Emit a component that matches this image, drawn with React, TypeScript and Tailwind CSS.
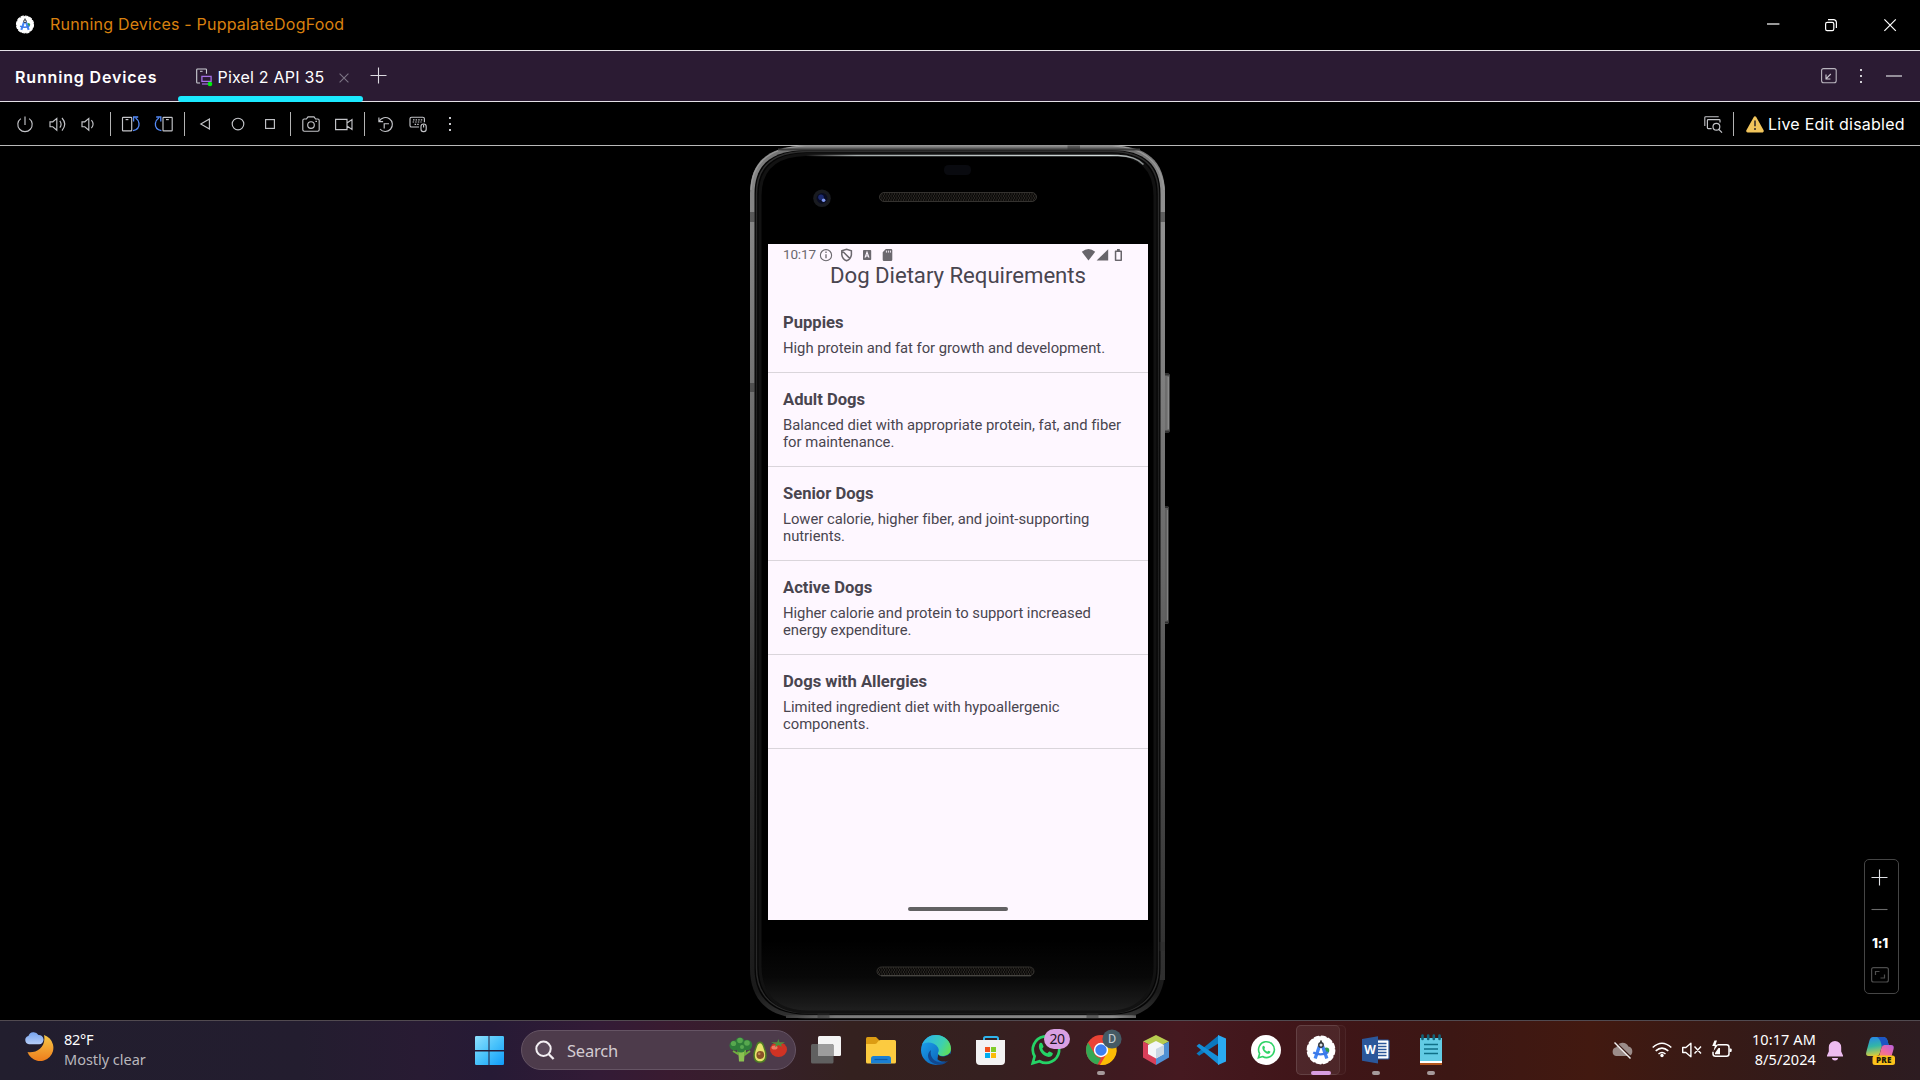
import type { ReactNode } from "react";

type ArtProps = { box: [number, number, number, number]; className?: string; children: ReactNode };

/* A drawing whose coordinates are those of the desktop itself. */
function Art({ box, className = "", children }: ArtProps) {
  return (
    <svg
      width={box[2]}
      height={box[3]}
      viewBox={box.join(" ")}
      fill="none"
      className={`shrink-0 ${className}`}
      aria-hidden="true"
    >
      {children}
    </svg>
  );
}

function StudioLogo({ cx, cy, r }: { cx: number; cy: number; r: number }) {
  const k = r / 15;
  return (
    <g transform={`translate(${cx} ${cy}) scale(${k})`}>
      <circle r="14" fill="#fff" />
      <circle r="13.9" stroke="#fff" strokeWidth="1.8" strokeDasharray="4.5 2.78" strokeLinecap="round" />
      <circle cx="5.6" cy="0.4" r="2.9" fill="#2f9e4f" />
      <path d="M-1.6 -4 L-6 8.8 M1.6 -4 L6 8.8" stroke="#4285f4" strokeWidth="3.4" />
      <path d="M-8 2.6 Q0 6.6 7.2 2.2" stroke="#3b78e7" strokeWidth="2.4" />
      <rect x="-0.9" y="-9.8" width="1.8" height="3" fill="#333" />
      <circle cy="-5.2" r="2.3" fill="#d8dce2" stroke="#30343a" strokeWidth="1.5" />
    </g>
  );
}

function TitleBar() {
  return (
    <header className="flex h-[51px] shrink-0 items-center border-b border-[#e4e0e6] bg-black">
      <Art box={[15, 15, 20, 20]} className="ml-[15px]">
        <StudioLogo cx={25} cy={24.5} r={9.2} />
      </Art>
      <h1 className="mb-0.5 ml-[15px] text-base tracking-[0.2px] text-[#d9810f]">Running Devices - PuppalateDogFood</h1>
      <div className="mr-5 ml-auto flex items-center">
        <Art box={[1763, 15, 20, 20]}>
          <path d="M1767 24h12.5" stroke="#fff" strokeWidth="1.2" />
        </Art>
        <Art box={[1821, 15, 20, 20]} className="ml-[38px]">
          <rect x="1825.6" y="22.4" width="8.2" height="8.2" rx="1.6" stroke="#fff" strokeWidth="1.2" />
          <path d="M1828 19.7h5.6a2.8 2.8 0 0 1 2.8 2.8v5.6" stroke="#fff" strokeWidth="1.2" />
        </Art>
        <Art box={[1880, 15, 20, 20]} className="ml-[39px]">
          <path d="M1884.4 19.4l11.4 11.4M1895.8 19.4l-11.4 11.4" stroke="#fff" strokeWidth="1.2" />
        </Art>
      </div>
    </header>
  );
}

function TabBar() {
  return (
    <nav className="flex h-[51px] shrink-0 border-b border-[#e4e0e6] bg-[#2b1b33] text-white">
      <h2 className="mt-0.5 ml-[15px] w-[163px] self-center text-base font-semibold tracking-[0.84px]">
        Running Devices
      </h2>
      <div className="relative flex w-[185px] items-center">
        <Art box={[194, 66, 20, 21]} className="ml-4">
          <path d="M200 83h-2.5a.8.8 0 0 1-.8-.8V69.8a.8.8 0 0 1 .8-.8h8.2a.8.8 0 0 1 .8.8v4" stroke="#ced0d6" strokeWidth="1.1" />
          <path d="M200 71.3h2.6" stroke="#ced0d6" />
          <rect x="201.9" y="76.4" width="9.2" height="5" stroke="#a571e6" strokeWidth="1.3" />
          <path d="M202 84h6" stroke="#a571e6" strokeWidth="1.2" />
          <circle cx="210" cy="84" r="2.3" fill="#00ee10" />
        </Art>
        <span className="mt-0.5 ml-[3.5px] text-base tracking-[0.2px] whitespace-nowrap">Pixel 2 API 35</span>
        <Art box={[338, 72, 12, 12]} className="mt-1 mr-[13px] ml-auto">
          <path d="M339.6 73.6l8.8 8.8M348.4 73.6l-8.8 8.8" stroke="#7c7484" strokeWidth="1.1" />
        </Art>
        <div className="absolute inset-x-0 -bottom-px h-1.5 rounded-[3px] bg-[#1be9ff]" />
      </div>
      <Art box={[368, 66, 20, 20]} className="mt-[15px] ml-[5px]">
        <path d="M370.5 75.5h16M378.5 67.5v16" stroke="#dcdae0" strokeWidth="1.1" />
      </Art>
      <div className="mr-4 ml-auto flex items-center">
        <Art box={[1820, 66, 18, 20]}>
          <rect x="1821.6" y="68.6" width="14.6" height="14.2" rx="2" stroke="#b9b5be" strokeWidth="1.1" />
          <path d="M1830.8 74l-4.6 4.6M1826 74.6v4.4h4.4" stroke="#cfccd4" strokeWidth="1.1" />
        </Art>
        <Art box={[1856, 66, 10, 20]} className="ml-[18px]">
          <path d="M1860 69h2v2h-2zM1860 75h2v2h-2zM1860 81h2v2h-2z" fill="#d0cdd4" />
        </Art>
        <Art box={[1884, 66, 20, 20]} className="ml-[18px]">
          <path d="M1886 76h16" stroke="#a19ca6" strokeWidth="1.8" />
        </Art>
      </div>
    </nav>
  );
}

function Tool({ x, children }: { x: number; children: ReactNode }) {
  return (
    <button type="button" className="flex h-full w-[33px] items-center justify-center">
      <svg width="23" height="21" viewBox={`${x} 113 23 21`} fill="none" stroke="#c3c4c8" strokeWidth="1.15">
        {children}
      </svg>
    </button>
  );
}

function DeviceToolbar() {
  return (
    <div className="flex h-11 shrink-0 items-center border-b border-[#b9b9b9] bg-black pl-2">
      <Tool x={13}>
        <path d="M20.8 118.6a7.2 7.2 0 1 0 8.4 0M25 116.4v8.6" />
      </Tool>
      <Tool x={46}>
        <path d="M50 121.8h2.8l4-3.4v11.8l-4-3.4H50zM59.8 120.8q2.6 3.4 0 6.8M62 118q5.6 6.2 0 12.6" />
      </Tool>
      <Tool x={79}>
        <path d="M82 121.8h2.8l4-3.4v11.8l-4-3.4H82zM91.4 120.2q3.4 4 0 8" />
      </Tool>
      <div className="mr-[3px] ml-[3px] h-6 w-px bg-[#b4b4b4]" />
      <Tool x={119}>
        <rect x="122.5" y="117.3" width="9.2" height="13.6" rx="0.6" />
        <path d="M125.6 119.6h2.8" />
        <path d="M133 130.6q6.6-1.2 6-7.2q-.4-3.4-3.4-5.4M133.6 121.4v-4.4h4.6" stroke="#548af7" strokeWidth="1.3" />
      </Tool>
      <Tool x={152}>
        <rect x="163" y="117.3" width="9.2" height="13.6" rx="0.6" />
        <path d="M166 119.6h2.8" />
        <path d="M161.4 130.6q-6.600-1.200-6-7.200q.4-3.400 3.400-5.400M160.800 121.400v-4.400h-4.600" stroke="#548af7" strokeWidth="1.3" />
      </Tool>
      <div className="mr-[3px] ml-1 h-6 w-px bg-[#b4b4b4]" />
      <Tool x={193}>
        <path d="M200.8 124l8.6-5v10z" />
      </Tool>
      <Tool x={226}>
        <circle cx="238" cy="124" r="5.8" />
      </Tool>
      <Tool x={259}>
        <rect x="265.6" y="119.6" width="8.8" height="8.8" />
      </Tool>
      <div className="mr-[3px] ml-[3px] h-6 w-px bg-[#b4b4b4]" />
      <Tool x={299}>
        <path d="M302.8 120.4a1.4 1.4 0 0 1 1.4-1.4h2.2l1.6-2.2h6l1.6 2.2h2.2a1.4 1.4 0 0 1 1.4 1.4v9.4a1.4 1.4 0 0 1-1.4 1.4h-13.6a1.4 1.4 0 0 1-1.4-1.4z" />
        <circle cx="311" cy="125" r="3.3" />
        <path d="M315.4 121.4h1.6" />
      </Tool>
      <Tool x={332}>
        <path d="M335.6 119.4h11.4v10.2h-11.4zM347 123l5-3.4v9.8l-5-3.4" />
      </Tool>
      <div className="mr-[3px] ml-1 h-6 w-px bg-[#b4b4b4]" />
      <Tool x={373}>
        <path d="M378.9 117.4v4.2h4.2M379.2 121.2a7 7 0 1 1 .8 7.8M384.2 128.4v-4.6h4.8" />
      </Tool>
      <Tool x={406}>
        <path d="M419 127h-7.4a1.6 1.6 0 0 1-1.6-1.6v-6.6a1.6 1.6 0 0 1 1.6-1.6h11.2a1.6 1.6 0 0 1 1.6 1.6v3.4" />
        <path d="M413 119.8h10M412.6 122h9M414.6 124.4h5" strokeDasharray="1.5 1.1" />
        <rect x="421" y="124" width="5.2" height="7.6" rx="2.4" />
        <path d="M423.6 124.4v3" />
      </Tool>
      <Tool x={439}>
        <path d="M449 116.9h2v2h-2zM449 123h2v2h-2zM449 129.1h2v2h-2z" fill="#c9cace" stroke="none" />
      </Tool>
      <Art box={[1702, 114, 22, 20]} className="ml-auto">
        <path d="M1704.8 126v-8.400a.9.9 0 0 1 .9-.9h13" stroke="#c3c4c8" strokeWidth="1.1" />
        <path d="M1711.600 128.600h-3.400a.8.8 0 0 1-.8-.8v-7.400a.8.8 0 0 1 .8-.8h11a.8.8 0 0 1 .8.8v2" stroke="#c3c4c8" strokeWidth="1.2" />
        <circle cx="1716.4" cy="126.8" r="3.4" stroke="#c3c4c8" strokeWidth="1.2" />
        <path d="M1718.8 129.4l3.2 3.2" stroke="#c3c4c8" strokeWidth="1.3" />
      </Art>
      <div className="ml-[9px] h-6 w-px bg-[#b4b4b4]" />
      <Art box={[1745, 113, 20, 20]} className="ml-[11px]">
        <path d="M1755 116.8l7.400 13.200h-14.800z" fill="#f2c55c" stroke="#f2c55c" strokeWidth="2.8" strokeLinejoin="round" />
        <path d="M1755 119.6v5.600M1755 127v2" stroke="#5e4d33" strokeWidth="2" />
      </Art>
      <span className="mr-[14px] ml-[3px] w-[138px] text-base tracking-[0.25px] whitespace-nowrap text-white">
        Live Edit disabled
      </span>
    </div>
  );
}

function PhoneFrame() {
  return (
    <svg
      width="424"
      height="875"
      viewBox="748 145 424 875"
      fill="none"
      className="absolute -top-px left-0"
      aria-hidden="true"
    >
      <defs>
        <linearGradient id="metal" x1="0" y1="145" x2="0" y2="1018" gradientUnits="userSpaceOnUse">
          <stop offset="0" stopColor="#6e6e6e" />
          <stop offset="0.03" stopColor="#848484" />
          <stop offset="0.1" stopColor="#868686" />
          <stop offset="0.4" stopColor="#646464" />
          <stop offset="0.62" stopColor="#3c3c3c" />
          <stop offset="0.9" stopColor="#202020" />
          <stop offset="0.97" stopColor="#1a1a1a" />
          <stop offset="1" stopColor="#333" />
        </linearGradient>
        <linearGradient id="metalR" x1="0" y1="145" x2="0" y2="1018" gradientUnits="userSpaceOnUse">
          <stop offset="0" stopColor="#8c8c8c" />
          <stop offset="0.1" stopColor="#909090" />
          <stop offset="0.5" stopColor="#666" />
          <stop offset="0.75" stopColor="#444" />
          <stop offset="1" stopColor="#2a2a2a" />
        </linearGradient>
        <linearGradient id="chin" x1="0" y1="940" x2="0" y2="1014" gradientUnits="userSpaceOnUse">
          <stop offset="0" stopColor="#000" />
          <stop offset="0.5" stopColor="#080808" />
          <stop offset="0.85" stopColor="#191919" />
          <stop offset="1" stopColor="#222" />
        </linearGradient>
        <linearGradient id="shine" x1="806" y1="0" x2="1144" y2="0" gradientUnits="userSpaceOnUse">
          <stop offset="0" stopColor="#fff" stopOpacity="0" />
          <stop offset="0.15" stopColor="#c9d2d2" stopOpacity="0.8" />
          <stop offset="0.9" stopColor="#d5dede" />
          <stop offset="1" stopColor="#b5bcbc" stopOpacity="0.7" />
        </linearGradient>
        <linearGradient id="lip" x1="780" y1="0" x2="1150" y2="0" gradientUnits="userSpaceOnUse">
          <stop offset="0" stopColor="#333" />
          <stop offset="0.15" stopColor="#7a7a7a" />
          <stop offset="0.9" stopColor="#8a8a8a" />
          <stop offset="1" stopColor="#444" />
        </linearGradient>
        <linearGradient id="inner" x1="0" y1="145" x2="0" y2="1018" gradientUnits="userSpaceOnUse">
          <stop offset="0" stopColor="#2e2e2e" />
          <stop offset="0.4" stopColor="#1e1e1e" />
          <stop offset="1" stopColor="#2a2a2a" />
        </linearGradient>
        <pattern id="mesh" width="5" height="4" patternUnits="userSpaceOnUse">
          <rect width="5" height="4" fill="#0b0a09" />
          <path d="M0.5 0l2 2-2 2M3 0l2 2-2 2" stroke="#322e2a" strokeWidth="0.8" />
        </pattern>
      </defs>

      {/* side keys */}
      <rect x="1163" y="373.5" width="6.6" height="59" rx="1.5" fill="#6d6d6d" />
      <path d="M1168.2 377v52" stroke="#999" />
      <path d="M1165 374.5h4M1165 431.5h4" stroke="#333" strokeWidth="2" />
      <rect x="1163" y="506" width="5.6" height="118" rx="1.5" fill="#5e5e5e" />
      <path d="M1167.4 510v110" stroke="#858585" />
      <path d="M1165 507h3M1165 622.5h3" stroke="#2e2e2e" strokeWidth="2" />

      {/* body shell */}
      <path
        d="M750 194C750 160 770 146 806 145.5H1112C1146 146 1165 160 1165 194V968C1165 1000 1146 1018.5 1112 1018.5H806C768 1018.5 750 1000 750 968Z"
        fill="url(#metal)"
      />
      <path d="M1159.5 170Q1165 180 1165 194V980H1159.5z" fill="url(#metalR)" />
      <path
        d="M754.5 194C754.5 164 772 150.5 806 150H1112C1144 150.5 1160.5 164 1160.5 194V968C1160.5 998 1142 1014.8 1110 1014.8H808C772 1014.8 754.5 998 754.5 968Z"
        fill="#050505"
      />
      <path
        d="M756.5 194C756.5 166 774 152 806 151.5H1112C1142 152 1158.5 166 1158.5 194V968C1158.5 996 1140 1013 1110 1013H808C774 1013 756.5 996 756.5 968Z"
        stroke="url(#inner)"
        strokeWidth="1.4"
      />
      <path
        d="M760 196C760 168 776 155 806 154.5H1112C1140 155 1155 168 1155 196V966C1155 994 1138 1012 1110 1012H808C776 1012 760 994 760 966Z"
        fill="url(#chin)"
        stroke="#121212"
        strokeWidth="3"
      />

      {/* highlights and antenna bands */}
      <path d="M751 190C752 161 772 147 806 146H1112C1142 147 1161 160 1164 190" stroke="#999" strokeWidth="1.2" />
      <path d="M778 149.500H1140" stroke="#3a3a3a" strokeWidth="2" />
      <path d="M806 155.400H1118Q1136 156 1143.500 164.500" stroke="url(#shine)" strokeWidth="1.5" />
      <path d="M786 1016.600H1136" stroke="url(#lip)" strokeWidth="2.600" />
      <path
        d="M1067.5 145.5h12.5v5h-12.5zM750 212h5v10h-5zM1160 212h5v10h-5zM750 383h5v9h-5zM1159.500 942h5.500v9h-5.500zM817.500 1013.500h12v5h-12zM1086.500 1013.500h12v5h-12z"
        fill="#2c2c2c"
        fillOpacity="0.5"
      />

      {/* sensor, camera, speakers */}
      <rect x="944" y="165" width="27" height="10" rx="4.5" fill="#090a0f" />
      <circle cx="822" cy="198.3" r="8.800" fill="#191b20" />
      <circle cx="822" cy="198.3" r="5.400" fill="#090c22" />
      <circle cx="821" cy="197.200" r="2.800" fill="#1c2a6e" />
      <circle cx="823.600" cy="200.300" r="1.800" fill="#7f98f0" />
      <rect x="879.5" y="192.500" width="157" height="9" rx="4.5" fill="url(#mesh)" stroke="#34322f" />
      <rect x="877" y="967" width="157" height="8.600" rx="4.300" fill="url(#mesh)" stroke="#34322f" />
      <path d="M881 975.800h150" stroke="#55534e" strokeWidth="0.900" />
    </svg>
  );
}

const GROUPS = [
  { name: "Puppies", need: ["High protein and fat for growth and development."] },
  { name: "Adult Dogs", need: ["Balanced diet with appropriate protein, fat, and fiber", "for maintenance."] },
  { name: "Senior Dogs", need: ["Lower calorie, higher fiber, and joint-supporting", "nutrients."] },
  { name: "Active Dogs", need: ["Higher calorie and protein to support increased", "energy expenditure."] },
  { name: "Dogs with Allergies", need: ["Limited ingredient diet with hypoallergenic", "components."] },
];

function PhoneScreen() {
  return (
    <div className="relative mt-[98px] ml-5 flex h-[676px] w-[380px] flex-col bg-[#fef7ff] font-[Roboto,sans-serif] text-[#49454f]">
      <div className="flex h-[22px] shrink-0 items-center pl-[15px] text-[#6b686e]">
        <span className="mb-0.5 w-9 text-[13.5px] leading-5 tracking-[-0.15px]">10:17</span>
        <Art box={[819, 247, 75, 16]}>
          <circle cx="826" cy="255.200" r="5.600" stroke="#6b686e" strokeWidth="1.1" />
          <path d="M826 254.200v4M826 251.600v1.300" stroke="#6b686e" strokeWidth="1.3" />
          <path d="M841.800 250.800l4.800-1.400 4.800 1.400v4q-.6 4.200-4.800 6-4.200-1.800-4.800-6zM842.600 251.200l7.400 7.400" stroke="#6b686e" strokeWidth="1.5" />
          <rect x="863" y="250" width="8.200" height="10" rx="0.8" fill="#6b686e" />
          <path d="M865 257.600l2-5.400 2 5.400M865.800 256h2.600" stroke="#fef7ff" strokeWidth="1.1" />
          <path d="M885.800 249h5.200a1.300 1.300 0 0 1 1.300 1.300v9.400a1.300 1.300 0 0 1-1.300 1.300h-7a1.300 1.300 0 0 1-1.300-1.300v-7.400z" fill="#6b686e" />
          <path d="M886.400 250.600v2M888.400 250.600v2M890.400 250.600v2" stroke="#fef7ff" strokeWidth="0.9" />
        </Art>
        <Art box={[1081, 247, 44, 16]} className="mr-[23px] ml-auto">
          <path d="M1081.800 251.800q6.700-5.400 13.400 0l-6.700 8.700z" fill="#68656b" />
          <path d="M1108.200 249.200v11.400h-11.600z" fill="#68656b" />
          <path d="M1117 249h2.800v1.400h1.400a.8.8 0 0 1 .8.8v9a.8.8 0 0 1-.8.8h-5.600a.8.8 0 0 1-.8-.8v-9a.8.8 0 0 1 .8-.8h1.400z" fill="#68656b" />
          <path d="M1116.300 252h4.200v7.600h-4.200z" fill="#fef7ff" />
        </Art>
      </div>
      <h3 className="-mt-[4px] h-[26px] shrink-0 text-center text-[22.2px] leading-[26px] tracking-[-0.04px]">
        Dog Dietary Requirements
      </h3>
      <ul className="mt-[8px]">
        {GROUPS.map((g) => (
          <li key={g.name} className="border-b border-[#dad5db] px-[15px] pt-[17px] pb-[14px]">
            <h4 className="text-[16.6px] leading-5 font-bold">{g.name}</h4>
            <p className="mt-[7px] text-[14.8px] leading-[17.5px] tracking-[-0.02px] whitespace-nowrap">
              {g.need.map((line) => (
                <span key={line} className="block">
                  {line}
                </span>
              ))}
            </p>
          </li>
        ))}
      </ul>
      <div className="mx-auto mt-auto mb-[9px] h-1 w-[100px] rounded-full bg-[#626163]" />
    </div>
  );
}

function ZoomPanel() {
  return (
    <aside className="absolute right-[21px] bottom-[26px] flex h-[135px] w-[35px] flex-col items-center rounded-[5px] border border-[#454545] pr-[3px] text-white">
      <Art box={[1871, 867, 20, 20]} className="mt-[7px]">
        <path d="M1872.5 877.5h16M1880.500 869.500v16" stroke="#dfe1e5" strokeWidth="1.1" />
      </Art>
      <Art box={[1871, 904, 20, 10]} className="mt-[17px]">
        <path d="M1872.5 909.500h16" stroke="#6a6a6a" strokeWidth="1.1" />
      </Art>
      <span className="mt-[20px] h-[18px] text-[13.5px] leading-[18px] font-extrabold tracking-[-0.3px]">1:1</span>
      <Art box={[1871, 966, 20, 18]} className="mt-[14px]">
        <rect x="1872.6" y="967.600" width="16.800" height="14.400" rx="2" stroke="#4d4d4d" strokeWidth="1.2" />
        <path d="M1876.500 975v-3.500h4M1885.500 974.500v3.500h-4" stroke="#4d4d4d" strokeWidth="1.2" />
      </Art>
    </aside>
  );
}

function Slot({ dot = "", box = false, x, children }: { dot?: string; box?: boolean; x: number; children: ReactNode }) {
  return (
    <div className="relative flex h-full w-[55px] items-start pl-3">
      {box && (
        <>
          <div className="absolute top-1 left-[3px] h-[50px] w-[50px] rounded-[5px] border border-white/5 bg-white/[0.02]" />
          <div className="absolute top-1 left-[3px] h-[50px] w-11 rounded-[5px] border border-white/[0.07] bg-white/[0.06]" />
        </>
      )}
      <svg width="36" height="36" viewBox={`${x} 1029 36 36`} fill="none" className="relative mt-2 overflow-visible">
        {children}
      </svg>
      {dot && <div className={dot} />}
    </div>
  );
}

const DOT = "absolute left-6 bottom-[5px] h-1 w-2 rounded-full bg-[#a69a9b]";
const ACTIVE_DOT = "absolute left-[18px] bottom-[5px] h-1 w-5 rounded-full bg-[#d89de0]";

function Produce() {
  return (
    <Art box={[727, 1035, 62, 30]} className="mr-1.5 ml-auto">
      <path d="M738 1048l7-1-1 14.500h-5z" fill="#8cc152" />
      <path d="M733 1051l5 3 1-5M750 1051l-5 3.500v-6" stroke="#6fae3f" strokeWidth="2" />
      <g fill="#2f7d3a">
        <circle cx="734.5" cy="1045.500" r="5" />
        <circle cx="740" cy="1042.500" r="5" />
        <circle cx="747" cy="1045" r="5.200" />
        <circle cx="741" cy="1048" r="4.500" />
      </g>
      <g fill="#57a84e">
        <circle cx="733.500" cy="1043.500" r="2.600" />
        <circle cx="740" cy="1040.500" r="2.800" />
        <circle cx="747" cy="1043" r="2.800" />
        <circle cx="742" cy="1047" r="2" />
      </g>
      <path d="M760 1041.500c3.600 0 4 4.400 5.600 8.400 1.800 4.600 2 13-5.600 13s-7.400-8.400-5.600-13c1.600-4 2-8.400 5.600-8.400z" fill="#4e7d24" />
      <path d="M760 1043.200c2.400 0 3.200 4.200 4.300 7.400 1.500 4 1.500 10.600-4.300 10.600s-5.800-6.600-4.300-10.600c1.100-3.200 1.900-7.400 4.300-7.400z" fill="#e6e36a" />
      <circle cx="760.3" cy="1055" r="3.900" fill="#8a5128" />
      <circle cx="759.200" cy="1053.800" r="1.300" fill="#c38b58" />
      <ellipse cx="778.500" cy="1049.500" rx="8.500" ry="7.500" fill="#cf3324" />
      <ellipse cx="774.500" cy="1047.500" rx="3" ry="2" fill="#ee7a62" />
      <path d="M771 1042l6 .4 1.500-3.400 1 3.400 5.500-.4-4 2.400 1 2.600-3.500-2-3.500 2.200 1-2.800z" fill="#4c9140" />
    </Art>
  );
}

function Taskbar() {
  return (
    <footer className="relative flex h-[60px] shrink-0 border-t border-[#514a50] bg-[linear-gradient(90deg,#221e2e_0px,#231d2f_300px,#281b33_420px,#261a35_490px,#331b36_600px,#391b30_670px,#36202a_760px,#34211f_850px,#352020_990px,#3f1a20_1120px,#451920_1180px,#3f1518_1320px,#3c1714_1450px,#421910_1590px,#371a16_1720px,#2f1b1d_1850px,#2d1c21_1920px)] font-['Noto_Sans','Open_Sans',sans-serif] text-white">
      <div className="flex w-[473px] pl-[23px]">
        <Art box={[24, 1033, 32, 32]} className="mt-[11px]">
          <defs>
            <linearGradient id="moon" x1="0" y1="1036" x2="0" y2="1062" gradientUnits="userSpaceOnUse">
              <stop stopColor="#f7c948" />
              <stop offset="1" stopColor="#ee7d1c" />
            </linearGradient>
            <linearGradient id="cloud" x1="0" y1="1034" x2="0" y2="1045" gradientUnits="userSpaceOnUse">
              <stop stopColor="#7ba6ee" />
              <stop offset="1" stopColor="#b4cdf8" />
            </linearGradient>
          </defs>
          <path d="M45 1036a13.300 13.300 0 1 1-16.500 17c9 1.500 19-5 16.500-17z" fill="url(#moon)" />
          <path d="M30 1045.300a4.300 4.300 0 0 1-.6-8.400 5.600 5.600 0 0 1 10-1 4.400 4.400 0 0 1 .8 9.400z" fill="url(#cloud)" />
        </Art>
        <div className="mt-2 ml-[9px] text-[14.5px] leading-5">
          <p className="tracking-[-0.25px]">82°F</p>
          <p className="tracking-[-0.02px] text-[#b9b7bc]">Mostly clear</p>
        </div>
      </div>

      <Art box={[473, 1034, 34, 34]} className="mt-[13px]">
        <defs>
          <linearGradient id="win" x1="475" y1="1036" x2="504" y2="1065" gradientUnits="userSpaceOnUse">
            <stop stopColor="#8fe0fd" />
            <stop offset="0.5" stopColor="#48c2fb" />
            <stop offset="1" stopColor="#109bf8" />
          </linearGradient>
        </defs>
        <path d="M475 1037.200q0-1.200 1.200-1.200H488.500v14H475zM489.500 1036h13.300q1.200 0 1.200 1.200V1050h-14.500zM475 1051.500h13.500v13.500h-12.300q-1.200 0-1.200-1.200zM489.500 1051.500H504v12.300q0 1.200-1.200 1.200h-13.300z" fill="url(#win)" />
      </Art>

      <div className="mt-[9px] ml-[14px] flex h-10 w-[275px] items-center rounded-full border border-[#655464] bg-[#4d3b4b]">
        <Art box={[535, 1039, 22, 22]} className="ml-[13px]">
          <circle cx="543.500" cy="1048.800" r="7.200" fill="#5b4a5b" stroke="#f3eff3" strokeWidth="2" />
          <path d="M548.800 1054.200l4.800 4.800" stroke="#f3eff3" strokeWidth="2.300" />
        </Art>
        <span className="mt-0.5 pl-[10px] text-[16.5px] tracking-[-0.2px] text-[#d3ccd2]">Search</span>
        <Produce />
      </div>

      <div className="ml-[2px] flex">
        <Slot x={810}>
          <rect x="818" y="1036" width="23" height="20" rx="1.5" fill="#f4f4f4" />
          <rect x="811" y="1044" width="22.500" height="19.500" rx="1.500" fill="#606060" />
          <path d="M818 1044h14q1.500 0 1.500 1.500V1056H818z" fill="#9d9d9d" />
        </Slot>
        <Slot x={865}>
          <path d="M866 1038.500q0-1.500 1.500-1.500h8.500l3.500 3.500V1046H866z" fill="#dc9c13" />
          <path d="M866 1044h9q1.500 0 3-2.500 1-1.500 2.500-1.500h14q1.500 0 1.500 1.500V1062q0 1.500-1.500 1.500h-27q-1.500 0-1.500-1.500z" fill="#fccb40" />
          <path d="M871 1063.500v-5q0-2.500 2.500-2.500h15q2.500 0 2.500 2.500v5z" fill="#1a80d4" />
          <path d="M874.500 1059.500h13" stroke="#0c5ba8" strokeWidth="1.2" />
        </Slot>
        <Slot x={920}>
          <defs>
            <linearGradient id="edgeTop" x1="925" y1="1038" x2="951" y2="1052" gradientUnits="userSpaceOnUse">
              <stop stopColor="#2cb5e8" />
              <stop offset="0.6" stopColor="#3dd0b0" />
              <stop offset="1" stopColor="#66e04a" />
            </linearGradient>
            <linearGradient id="edgeLow" x1="921" y1="1045" x2="940" y2="1064" gradientUnits="userSpaceOnUse">
              <stop stopColor="#1a9be8" />
              <stop offset="1" stopColor="#0c63b8" />
            </linearGradient>
          </defs>
          <circle cx="936" cy="1050" r="15" fill="url(#edgeLow)" />
          <path d="M922 1044.500C925 1038 930 1035 936 1035c9 0 15 6.500 15 13.500 0 5.500-4.500 7.500-8.500 7.500-3.500 0-5-1.500-4.500-3 1-2 1-3.500 0-5.500-3-5.500-12-6.500-16-3z" fill="url(#edgeTop)" />
          <path d="M931 1050c-2 7 4 12.500 10.500 12.500 3 0 5.500-1.200 7.500-3-3 5-9 6.200-14 4.500-7-2.500-9.500-9.500-4-14z" fill="#12488f" />
          <path d="M938.300 1054c.2 2 3 3 6.500 2.200 2-.4 4-1.500 5.200-3l1.500 2-3 5c-3.500 2.300-8.500 1.500-11-1z" fill="#34201f" />
        </Slot>
        <Slot x={975}>
          <path d="M984 1041v-2.500q0-1.500 1.500-1.500h11q1.500 0 1.500 1.500v2.500" stroke="#2fb4ec" strokeWidth="2" />
          <path d="M976 1040h29v21q0 4-4 4h-21q-4 0-4-4z" fill="#f3f3f3" />
          <path d="M985 1047h5v5h-5z" fill="#f1511b" />
          <path d="M991 1047h5v5h-5z" fill="#80cc28" />
          <path d="M985 1053h5v5h-5z" fill="#00adef" />
          <path d="M991 1053h5v5h-5z" fill="#fbbc09" />
        </Slot>
        <Slot x={1030}>
          <path d="M1032.700 1063.300l1.900-7a13.200 13.200 0 1 1 5 4.900z" stroke="#25d366" strokeWidth="2.700" />
          <path d="M1039.200 1044.200c1-1.800 2.700-1.600 3.200-.4l1.100 2.600c.3.700-1.200 1.900-1.200 2.300 1 2 2.600 3.600 5 4.500.5 0 1.600-2 2.300-1.700l3 1.500c.6.400-.2 2.800-1.800 3.500-5.300 2.300-13.600-6-11.600-12.300z" fill="#25d366" />
          <rect x="1044" y="1029" width="26" height="20" rx="10" fill="#d9a0e3" />
          <text x="1057" y="1044.300" textAnchor="middle" fontSize="14" letterSpacing="-0.5" fill="#1c121d" fontFamily="Noto Sans, sans-serif">
            20
          </text>
        </Slot>
        <Slot x={1085} dot={DOT}>
          <circle cx="1101" cy="1050" r="15" fill="#ea4335" />
          <path d="M1088 1042.500l7.100 12.300q2.200 3.200 5.900 3.200l-3.500 6.600A15 15 0 0 1 1088 1042.500z" fill="#34a853" />
          <path d="M1101 1043h13.800A15 15 0 0 1 1100 1065l7.200-12.300z" fill="#fbbc05" />
          <circle cx="1101" cy="1050" r="7.200" fill="#fff" />
          <circle cx="1101" cy="1050" r="5.700" fill="#3d7ff0" />
          <circle cx="1112" cy="1039" r="9.600" fill="#455a64" />
          <text x="1112" y="1043.400" textAnchor="middle" fontSize="12.5" fill="#c3ced4" fontFamily="Roboto, sans-serif">
            D
          </text>
        </Slot>
        <Slot x={1140}>
          <path d="M1156 1035l13 6.500-13 6.500-13-6.500z" fill="#b8cc50" />
          <path d="M1143 1041.500l13 6.500v17l-13-7.500z" fill="#d8405a" />
          <path d="M1169 1041.500l-13 6.500v17l13-7.500z" fill="#4f90d4" />
          <path d="M1156 1041l8 4v9l-8 4.500-8-4.500v-9z" fill="#f3f6f8" />
          <path d="M1156 1049l8-4v9l-8 4.500z" fill="#c9d7e4" />
        </Slot>
        <Slot x={1195}>
          <path d="M1196.500 1053.500l2.600 2.200L1219 1043v-8z" fill="#0b78be" />
          <path d="M1196.500 1046l2.600-2.200L1219 1057v8z" fill="#158fd8" />
          <path d="M1218 1035l8 3.500v23l-8 3.500z" fill="#2aaaf2" />
        </Slot>
        <Slot x={1250}>
          <circle cx="1266" cy="1050" r="15" fill="#fff" />
          <path d="M1258.400 1057.800l1.200-4.300a7.900 7.900 0 1 1 3 3z" stroke="#2fd366" strokeWidth="1.6" />
          <path d="M1262.500 1046.500c.6-1 1.600-.9 1.900-.2l.6 1.500c.2.400-.7 1-.7 1.300.6 1.200 1.500 2 2.900 2.600.3 0 .9-1.100 1.300-1l1.800.9c.3.200-.1 1.600-1 2-3.100 1.300-8-3.500-6.800-7.100z" fill="#2fd366" />
        </Slot>
        <Slot x={1305} dot={ACTIVE_DOT} box>
          <StudioLogo cx={1321} cy={1050} r={14.6} />
        </Slot>
        <Slot x={1360} dot={DOT}>
          <path d="M1377 1040h11q1 0 1 1v17q0 1-1 1h-11z" fill="#fff" stroke="#2b579a" strokeWidth="1.2" />
          <path d="M1378 1043.500h8.500M1378 1046.500h8.500M1378 1049.500h8.500M1378 1052.500h8.500M1378 1055.500h8.500" stroke="#2b579a" strokeWidth="1.3" />
          <path d="M1362 1039l16-2.800v27.300l-16-2.800z" fill="#2b579a" />
          <text x="1370" y="1054.400" textAnchor="middle" fontSize="12" fontWeight="700" fill="#fff" fontFamily="Open Sans, sans-serif">
            W
          </text>
        </Slot>
        <Slot x={1415} dot={DOT}>
          <rect x="1420" y="1060" width="22" height="5" fill="#b4561c" />
          <rect x="1420" y="1058" width="22" height="5" fill="#fff" />
          <rect x="1420" y="1038" width="22" height="23" fill="#62cbe4" />
          <path d="M1424 1044.500h14M1424 1049h14M1424 1053.500h14" stroke="#0f6f87" strokeWidth="1.5" />
          <path d="M1422.500 1035.500v3.500M1428.200 1035.500v3.500M1433.800 1035.500v3.500M1439.500 1035.500v3.500" stroke="#12647a" strokeWidth="2.6" strokeLinecap="round" />
        </Slot>
      </div>

      <div className="ml-auto flex">
        <Art box={[1610, 1037, 126, 26]} className="mt-4">
          <path d="M1616 1056a4.500 4.500 0 0 1 .4-8.800 6.500 6.500 0 0 1 12-.8 5 5 0 0 1 .6 9.600z" fill="#9b8c89" />
          <path d="M1615.500 1042.500l16 15.500" stroke="#3a1a15" strokeWidth="2" />
          <path d="M1614.500 1042.500l16 16" stroke="#f5f2f1" strokeWidth="1.4" />
          <path d="M1652.700 1047.500q9.300-8.600 18.600 0M1655.700 1050.900q6.300-5.600 12.600 0M1658.500 1054q3.500-3 7 0" stroke="#fff" strokeWidth="1.5" />
          <circle cx="1662" cy="1055.500" r="1.700" fill="#fff" />
          <path d="M1682.700 1047.500h3.200l5-4.200v13.400l-5-4.200h-3.200zM1694.500 1046.500l6.500 7M1701 1046.500l-6.500 7" stroke="#fff" strokeWidth="1.4" strokeLinejoin="round" />
          <path d="M1717.500 1044.700h9q2.500 0 2.500 2.500v6.600q0 2.500-2.500 2.500h-11q-2.500 0-2.500-2.500v-2" stroke="#fff" strokeWidth="1.5" />
          <path d="M1729.500 1048.500h1.200q1 0 1 1v1.500q0 1-1 1h-1.200z" fill="#fff" />
          <path d="M1714.500 1040.500l-2.300 5.500h2.600l-1.200 5 4.500-6.200h-2.600l1.500-4.300z" fill="#fff" />
          <path d="M1715 1053l3.500-5h1.500v6.300h-5z" fill="#fff" />
        </Art>
        <div className="mt-2 w-20 text-right text-[14.5px] leading-5">
          <p className="tracking-[0.1px]">10:17 AM</p>
          <p className="tracking-[0.1px]">8/5/2024</p>
        </div>
        <Art box={[1825, 1038, 20, 24]} className="mt-[17px] ml-[9px]">
          <path d="M1835 1041a6.200 6.200 0 0 1 6.200 6.200v4.300l1.800 4v1h-16v-1l1.800-4v-4.300a6.200 6.200 0 0 1 6.200-6.200z" fill="#eebcf0" />
          <path d="M1832 1058h6a3 2.400 0 0 1-6 0z" fill="#eebcf0" />
        </Art>
        <Art box={[1864, 1034, 34, 34]} className="mt-[13px] mr-[22px] ml-[19px]">
          <defs>
            <linearGradient id="coA" x1="1870" y1="1037" x2="1873" y2="1056" gradientUnits="userSpaceOnUse">
              <stop stopColor="#2787e8" />
              <stop offset="0.5" stopColor="#33b6a6" />
              <stop offset="1" stopColor="#d9cc3c" />
            </linearGradient>
            <linearGradient id="coB" x1="1893" y1="1043" x2="1880" y2="1062" gradientUnits="userSpaceOnUse">
              <stop stopColor="#b060e8" />
              <stop offset="0.5" stopColor="#f06aa0" />
              <stop offset="1" stopColor="#f59a4a" />
            </linearGradient>
          </defs>
          <path d="M1873 1037h10q3.500 0 4.500 3.500l1.200 4.500h-4q-2.500 0-3.200 2.500l-1.800 6q-.8 2.500-3.500 2.500h-7.500q-3.500 0-2.400-4l3-11q1-4 3.700-4z" fill="url(#coA)" />
          <path d="M1881 1037h2.500q3 0 4 3.500l1.200 4.500h-4q-2 0-3 2-.5-7-4.500-10z" fill="#1d55c4" />
          <path d="M1884.500 1045h6.500q3.500 0 2.600 4l-2.600 9q-1 4-4.500 4h-9l4-14.500q.8-2.500 3-2.500z" fill="url(#coB)" />
          <rect x="1872.500" y="1055.500" width="22.500" height="9.500" rx="2.500" fill="#fcc21b" />
          <text x="1883.800" y="1063.300" textAnchor="middle" fontSize="8" fontWeight="800" letterSpacing="0.3" fill="#221a08" fontFamily="Open Sans, sans-serif">
            PRE
          </text>
        </Art>
      </div>
    </footer>
  );
}

export default function App() {
  return (
    <div className="flex h-[1080px] w-[1920px] flex-col overflow-hidden bg-black font-[Inter,sans-serif]">
      <TitleBar />
      <TabBar />
      <DeviceToolbar />
      <main className="relative flex min-h-0 flex-1 justify-center bg-black">
        <div className="relative w-[424px]">
          <PhoneFrame />
          <PhoneScreen />
        </div>
        <ZoomPanel />
      </main>
      <Taskbar />
    </div>
  );
}
